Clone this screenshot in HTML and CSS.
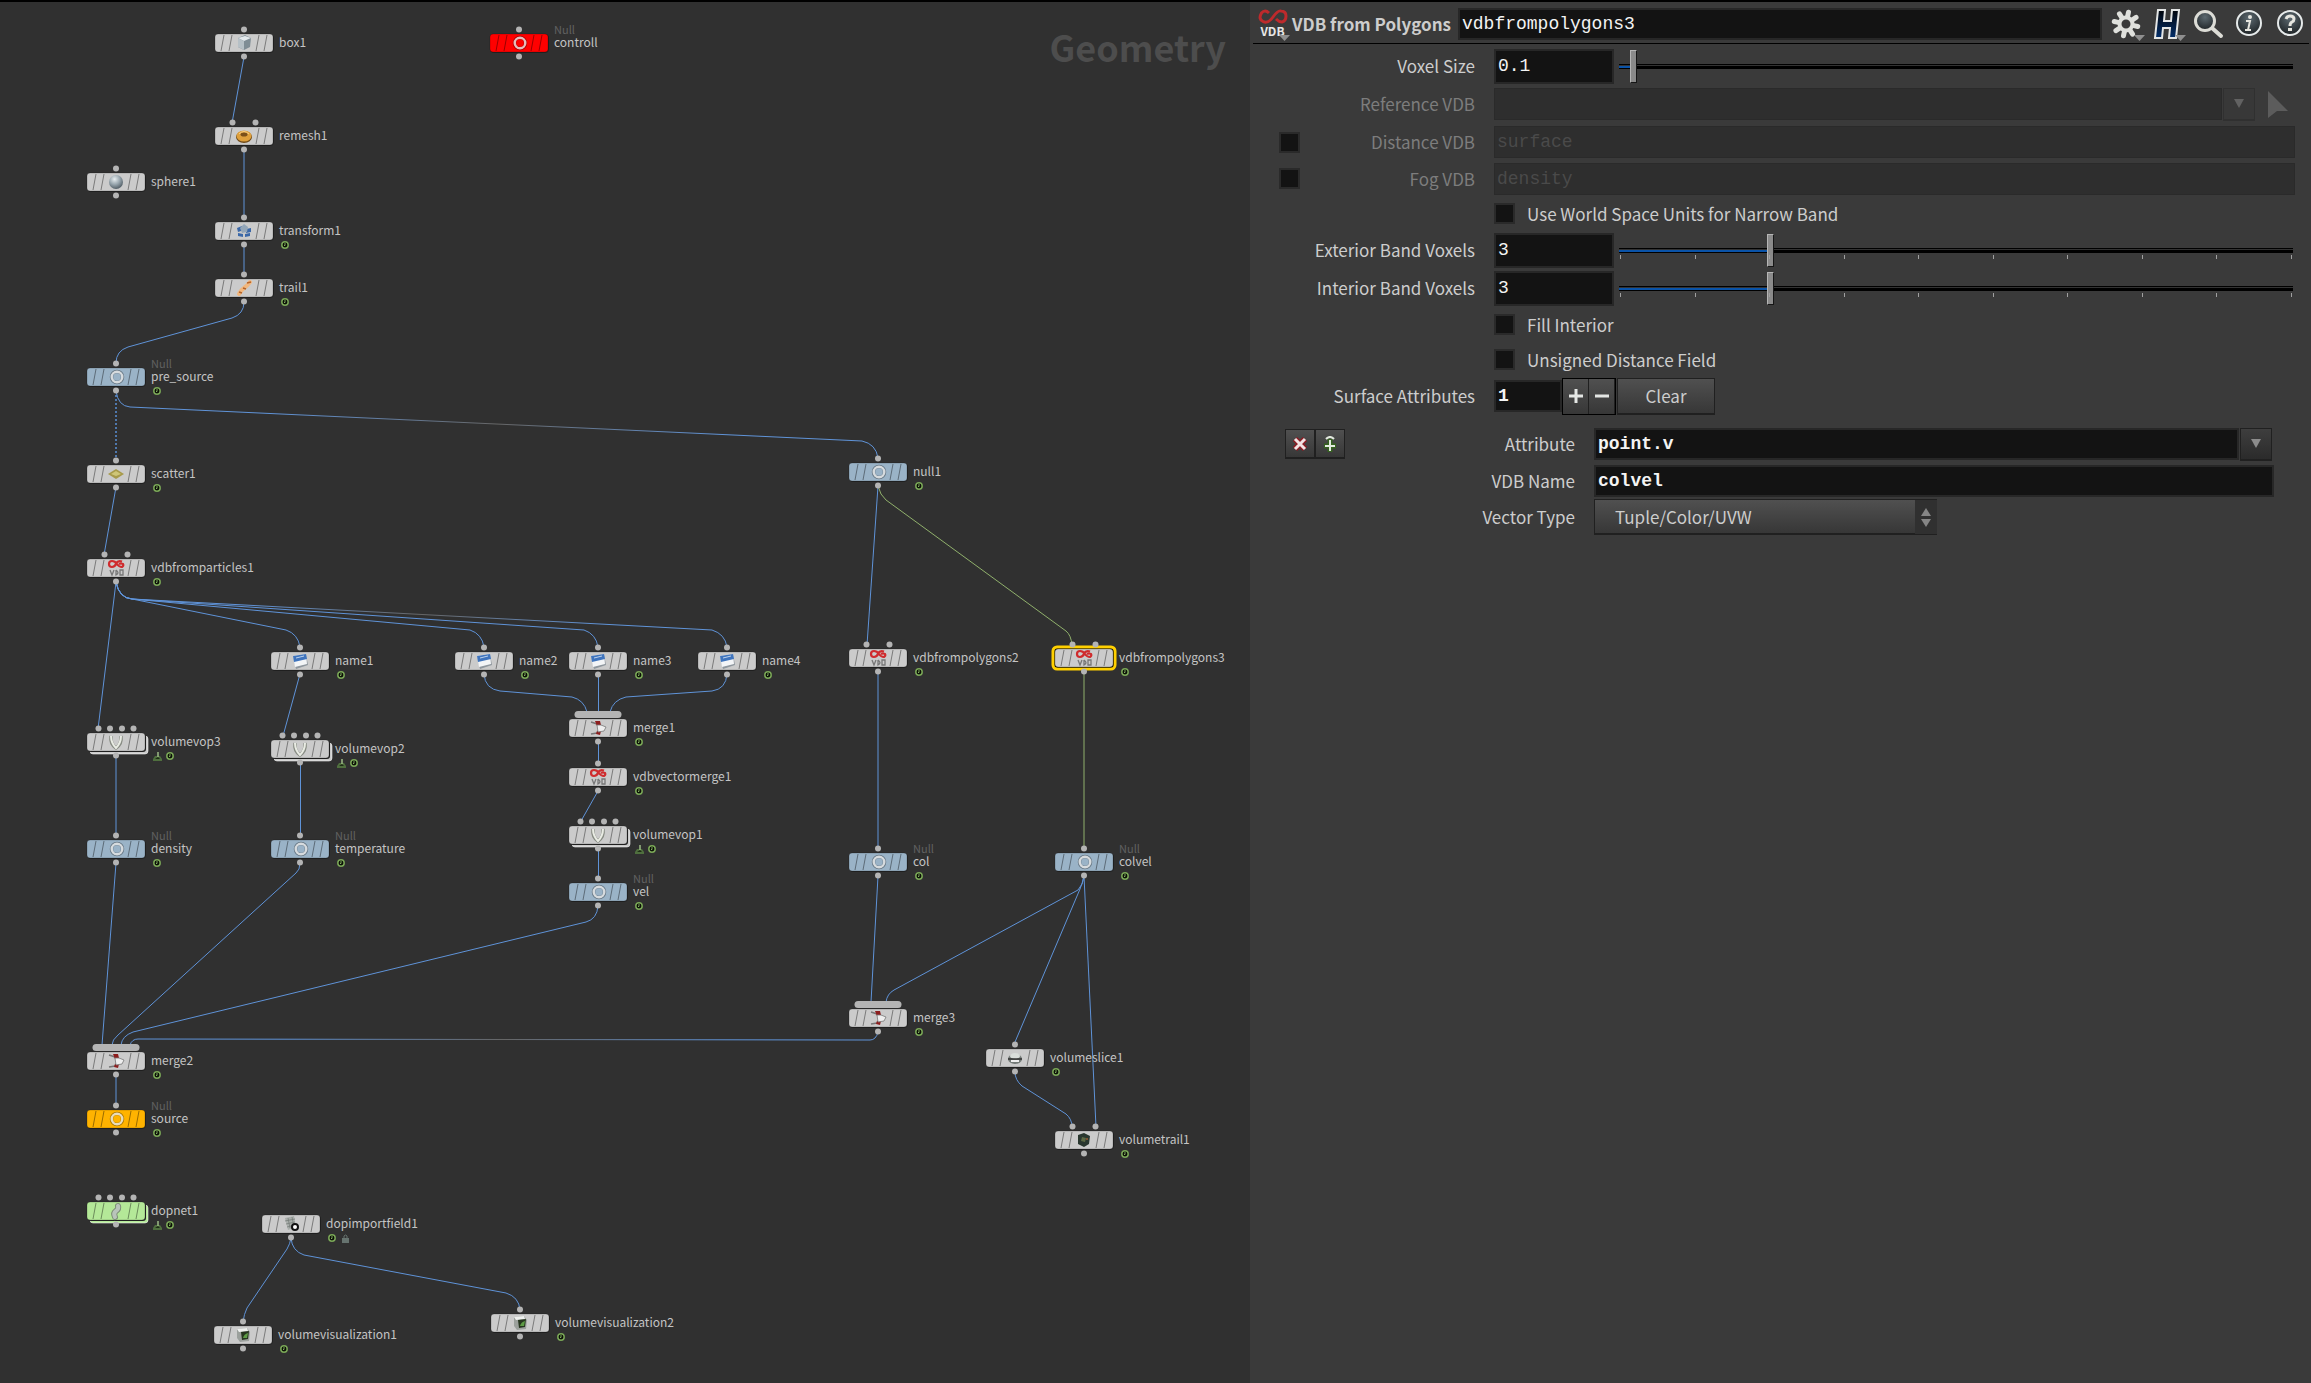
FILE: index.html
```html
<!DOCTYPE html>
<html lang="en">
<head>
<meta charset="utf-8">
<title>Geometry network</title>
<link rel="stylesheet" href="styles.css">
</head>
<body>
<svg class="defs" aria-hidden="true">
  <defs>
    <linearGradient id="fade"><stop offset="0" stop-color="#5f93d8"/><stop offset=".2" stop-color="#5f93d8"/><stop offset=".5" stop-color="#666"/><stop offset=".8" stop-color="#5f93d8"/><stop offset="1" stop-color="#5f93d8"/></linearGradient>
    <radialGradient id="ball" cx=".4" cy=".3" r=".75"><stop offset="0" stop-color="#e8eef0"/><stop offset=".5" stop-color="#98a6ae"/><stop offset="1" stop-color="#4a565e"/></radialGradient>
    <radialGradient id="glass" cx=".5" cy=".3" r=".8"><stop offset="0" stop-color="#5c6970"/><stop offset="1" stop-color="#15191b"/></radialGradient>
    <linearGradient id="navy" x2="0" y2="1"><stop offset="0" stop-color="#02060c"/><stop offset="1" stop-color="#04306c"/></linearGradient>

    <g id="tile">
      <rect x="-29" y="-9" width="59" height="19" rx="4" fill="#0004"/>
      <rect x="-29" y="-9" width="58" height="18" rx="3" fill="currentColor" stroke="#0003"/>
      <path d="M-20-8l-3 16M-12-8l-3 16M15-8l-3 16M23-8l-3 16" stroke="#000" stroke-opacity=".4" fill="none"/>
    </g>
    <g id="stack"><rect x="-26" y="-6" width="58" height="18" rx="3" fill="currentColor" stroke="#fff8"/><rect x="-28" y="-8" width="58" height="18" rx="3" fill="#303030"/></g>
    <g id="in1"><circle cy="-13.500" r="3"/></g>
    <g id="in2"><circle cx="-11.500" cy="-13.500" r="3"/><circle cx="11.500" cy="-13.500" r="3"/></g>
    <g id="in4"><circle cx="-17.500" cy="-13.500" r="3"/><circle cx="-6" cy="-13.500" r="3"/><circle cx="6" cy="-13.500" r="3"/><circle cx="17.500" cy="-13.500" r="3"/></g>
    <g id="bar"><rect x="-23.500" y="-17" width="47" height="7" rx="3.500"/></g>
    <g id="out"><circle cy="13.500" r="3"/></g>

    <g id="g-null"><circle cx="1" r="5.500" fill="none" stroke="#0005" stroke-width="3.500"/><circle cx="1" r="5.300" fill="none" stroke="#fffb" stroke-width="2.400"/></g>
    <g id="g-box"><path d="M-6-5L1-8 7-5 6 4 0 7-6 4z" fill="#7f8d95"/><path d="M-6-5L1-7 7-5 0-2z" fill="#e3e9ec"/><path d="M-6-5L0-2V7L-6 4z" fill="#b6c0c6"/></g>
    <g id="g-torus"><ellipse cy="1" rx="8" ry="6" fill="#6f4a19"/><ellipse rx="7.500" ry="5.500" fill="#dfa03c"/><ellipse cy="-1.500" rx="3.500" ry="2" fill="#7b501a"/><path d="M-5-2Q0-7 5-2" stroke="#f6d08a" fill="none"/></g>
    <g id="g-sphere"><circle r="7" fill="url(#ball)"/></g>
    <g id="g-xform"><path d="M-7-3l5-2 2 4-6 2zM2-2l5-1v4l-5 1zM-6 2l5 1v3l-5-1zM1 3l5-1v3l-5 1z" fill="#3b68a8"/><path d="M-4-3L0-7 4-4 3 1-2 2z" fill="#93a6b8"/></g>
    <g id="g-trail"><path d="M-5 6Q-3 2 0 0T6-6" stroke="#f1b77e" stroke-width="4" stroke-linecap="round" fill="none"/><path d="M3-5l4-1M-1 0l3 1M-5 4l3 1" stroke="#b56228" stroke-width="1.500"/></g>
    <g id="g-scatter"><path d="M-8 0L0-5 8 0 0 5z" fill="#a79a4b"/><path d="M-5 0L0-3 5 0 0 2z" fill="#cfc678"/></g>
    <g id="g-vdb"><path d="M6-6.500Q2-8 0-4.500-1-1-4-1-7-1-7-4-7-7-4-7-1-7 1-4 3-1 6-1 8-2 7-4 5-5 3-4" stroke="#cf2b2d" stroke-width="2.200" fill="none"/><path d="M-6 2l2 5 2-5M0 2v5q4-2 0-5M4 2v5h3V2z" stroke="#777" stroke-width="1.300" fill="none"/></g>
    <g id="g-name"><path d="M-7-4L6-7 8 4-4 8z" fill="#8f979e"/><path d="M-7-5L6-7 7 3-5 6z" fill="#f3f5f7"/><path d="M-7-5L6-7 7-2-6 1z" fill="#3f74bd"/><path d="M-4-3l8-2" stroke="#bdd3ee"/></g>
    <g id="g-merge"><path d="M-7-6L-1-4 2 0-1 5-7 6" stroke="#777" stroke-width="1.500" fill="none"/><path d="M-3-7h5l1 4-4 1zM-1 3h4l-1 4-4-1z" fill="#8d1d1d"/><path d="M-1-3h4l5 2-2 4-6 1z" fill="#eee" stroke="#777" stroke-width=".8"/></g>
    <g id="g-vop"><path d="M-5-6Q-6 2 0 6 6 2 5-6" stroke="#888c84" stroke-width="3.500" fill="none"/><path d="M-5-6Q-5 1 0 6 5 1 5-6" stroke="#e9ece4" stroke-width="2" fill="none"/></g>
    <g id="g-slice"><ellipse cy="1" rx="7" ry="5" fill="#737a77"/><ellipse cy="-2" rx="5" ry="3" fill="#d9ddda"/><path d="M-7 1h14" stroke="#333" stroke-width="1.500"/><path d="M-4 3h8" stroke="#eee" stroke-width="2"/></g>
    <g id="g-vtrail"><path d="M-6-5L0-7 6-4 5 4 0 7-6 4z" fill="#29372f"/><path d="M-2-3l4 1-1 4-4-1z" fill="#5d6a45"/><circle cx="3" cy="-1" r="1" fill="#9b5b35"/></g>
    <g id="g-dop"><path d="M2-5Q3-2 0 0T-1 6" stroke="#7d8f77" stroke-width="6" stroke-linecap="round" fill="none"/><path d="M2-5Q3-2 0 0T-1 6" stroke="#b9c4bb" stroke-width="4" stroke-linecap="round" fill="none"/></g>
    <g id="g-import"><path d="M-6-6L3-8 5 3-3 6z" fill="#a9aeab"/><path d="M-6-3l10-2M-5 0l9-2M-4 3l8-2M-3-6l2 10M1-7l2 10" stroke="#777d7a" stroke-width=".8"/><circle cx="4" cy="3" r="3" fill="#fff" stroke="#111" stroke-width="2"/></g>
    <g id="g-vis"><path d="M-6-6L4-7 7-3 6 6-3 7-6 3z" fill="#9ba09c"/><path d="M-6-6L4-7 5-4-4-3z" fill="#eef0ee"/><path d="M-2-3l8-1-1 8-6 1z" fill="#26361f"/><path d="M0 3Q1-1 5-2L4 3z" fill="#5d9c45"/></g>
    <g id="f-time"><circle cx="4" cy="4" r="3.200" fill="#0a0f05" stroke="#7aa757" stroke-width="1.500"/><path d="M4 2v2.500H3" stroke="#9ccf76" stroke-width=".8" fill="none"/></g>
    <g id="f-net"><path d="M0 9V7l2-3h5l2 3v2z" fill="#4f6f3e"/><path d="M2 7l3-2 2 2" fill="#1e2c16"/><path d="M5 0v5" stroke="#9dbb86" stroke-width="1.500"/></g>
    <g id="f-lock"><path d="M1 4h7v5H1z" fill="#66736f"/><path d="M3 4V2q1.500-2 3 0v2" stroke="#66736f" fill="none"/></g>
    <path id="drop" d="M0 0h11L5.500 6z" fill="#8f8f8f"/>
  </defs>
</svg>

<main class="workspace">
<section class="network" aria-label="Network editor">
  <h1 class="context">Geometry</h1>
  <svg class="wires" aria-hidden="true">
    <path d="M244 57L232 123M244 150V218M244 245V275M244 302Q244 314 232 318L128 347Q116 351 116 363"/>
    <path class="dotted" d="M116 391V460"/>
    <path class="faded" d="M116 391Q118 406 130 407L862 441Q876 444 878 458"/>
    <path d="M116 487L104 555M116 582L98 729M116 582Q119 598 132 599L286 630Q298 634 300 647"/>
    <path d="M116 582Q119 598 132 599L470 630Q482 634 484 647M116 582Q119 598 132 599L584 630Q596 634 598 647"/>
    <path class="faded" d="M116 582Q119 598 132 599L712 630Q725 634 727 647"/>
    <path d="M300 674L283 736M484 674Q485 689 500 691L572 697Q584 700 587 712M598.500 674V712M727 674Q726 689 712 691L626 697Q613 700 610 712"/>
    <path d="M598.500 742V764M598 791L581 821M598.500 849V878M598 906Q597 919 586 922L133 1032Q122 1036 121 1045"/>
    <path d="M116 756V835M300.500 763V835M116 863L102 1045M300 863Q300 870 296 873L118 1035Q112 1040 112 1045M116 1075V1105"/>
    <path class="faded" d="M878 1032Q876 1040 870 1040L138 1039Q132 1039 130 1045"/>
    <path d="M878 486L867 645M878 672V849M878 876L871 1002"/>
    <path class="active" d="M878 486Q880 495 886 500L1066 631Q1071 635 1072 645M1084 672V849"/>
    <path d="M1084 876Q1083 885 1078 890L894 990Q887 994 886 1002M1084 876Q1083 882 1080 889L1015 1042M1084 876L1096 1127M1015 1072Q1015 1080 1022 1086L1066 1114Q1072 1119 1072 1127"/>
    <path d="M291 1238Q290 1244 287 1249L247 1308Q244 1314 243 1322M291 1238Q292 1251 304 1255L506 1293Q519 1297 520 1310"/>
  </svg>

  <div class="node" style="left:244px;top:43px"><svg class="tile"><use href="#in1"/><use href="#out"/><use href="#tile"/><use href="#g-box"/></svg><div class="label"><span class="name">box1</span></div></div>
  <div class="node red" style="left:519px;top:43px"><svg class="tile"><use href="#in1"/><use href="#out"/><use href="#tile"/><use href="#g-null"/></svg><div class="label"><span class="type">Null</span><span class="name">controll</span></div></div>
  <div class="node" style="left:244px;top:136px"><svg class="tile"><use href="#in2"/><use href="#out"/><use href="#tile"/><use href="#g-torus"/></svg><div class="label"><span class="name">remesh1</span></div></div>
  <div class="node" style="left:116px;top:182px"><svg class="tile"><use href="#in1"/><use href="#out"/><use href="#tile"/><use href="#g-sphere"/></svg><div class="label"><span class="name">sphere1</span></div></div>
  <div class="node" style="left:244px;top:231px"><svg class="tile"><use href="#in1"/><use href="#out"/><use href="#tile"/><use href="#g-xform"/></svg><div class="label"><span class="name">transform1</span><span class="flags"><svg><use href="#f-time"/></svg></span></div></div>
  <div class="node" style="left:244px;top:288px"><svg class="tile"><use href="#in1"/><use href="#out"/><use href="#tile"/><use href="#g-trail"/></svg><div class="label"><span class="name">trail1</span><span class="flags"><svg><use href="#f-time"/></svg></span></div></div>
  <div class="node null" style="left:116px;top:377px"><svg class="tile"><use href="#in1"/><use href="#out"/><use href="#tile"/><use href="#g-null"/></svg><div class="label"><span class="type">Null</span><span class="name">pre_source</span><span class="flags"><svg><use href="#f-time"/></svg></span></div></div>
  <div class="node" style="left:116px;top:474px"><svg class="tile"><use href="#in1"/><use href="#out"/><use href="#tile"/><use href="#g-scatter"/></svg><div class="label"><span class="name">scatter1</span><span class="flags"><svg><use href="#f-time"/></svg></span></div></div>
  <div class="node null" style="left:878px;top:472px"><svg class="tile"><use href="#in1"/><use href="#out"/><use href="#tile"/><use href="#g-null"/></svg><div class="label"><span class="name">null1</span><span class="flags"><svg><use href="#f-time"/></svg></span></div></div>
  <div class="node" style="left:116px;top:568px"><svg class="tile"><use href="#in2"/><use href="#out"/><use href="#tile"/><use href="#g-vdb"/></svg><div class="label"><span class="name">vdbfromparticles1</span><span class="flags"><svg><use href="#f-time"/></svg></span></div></div>
  <div class="node" style="left:300px;top:661px"><svg class="tile"><use href="#in1"/><use href="#out"/><use href="#tile"/><use href="#g-name"/></svg><div class="label"><span class="name">name1</span><span class="flags"><svg><use href="#f-time"/></svg></span></div></div>
  <div class="node" style="left:484px;top:661px"><svg class="tile"><use href="#in1"/><use href="#out"/><use href="#tile"/><use href="#g-name"/></svg><div class="label"><span class="name">name2</span><span class="flags"><svg><use href="#f-time"/></svg></span></div></div>
  <div class="node" style="left:598px;top:661px"><svg class="tile"><use href="#in1"/><use href="#out"/><use href="#tile"/><use href="#g-name"/></svg><div class="label"><span class="name">name3</span><span class="flags"><svg><use href="#f-time"/></svg></span></div></div>
  <div class="node" style="left:727px;top:661px"><svg class="tile"><use href="#in1"/><use href="#out"/><use href="#tile"/><use href="#g-name"/></svg><div class="label"><span class="name">name4</span><span class="flags"><svg><use href="#f-time"/></svg></span></div></div>
  <div class="node" style="left:878px;top:658px"><svg class="tile"><use href="#in2"/><use href="#out"/><use href="#tile"/><use href="#g-vdb"/></svg><div class="label"><span class="name">vdbfrompolygons2</span><span class="flags"><svg><use href="#f-time"/></svg></span></div></div>
  <div class="node" style="left:1084px;top:658px"><svg class="tile"><rect class="selected" x="-31" y="-11" width="62" height="22" rx="4"/><use href="#in2"/><use href="#out"/><use href="#tile"/><use href="#g-vdb"/></svg><div class="label"><span class="name">vdbfrompolygons3</span><span class="flags"><svg><use href="#f-time"/></svg></span></div></div>
  <div class="node" style="left:598px;top:728px"><svg class="tile"><use href="#bar"/><use href="#out"/><use href="#tile"/><use href="#g-merge"/></svg><div class="label"><span class="name">merge1</span><span class="flags"><svg><use href="#f-time"/></svg></span></div></div>
  <div class="node" style="left:598px;top:777px"><svg class="tile"><use href="#in1"/><use href="#out"/><use href="#tile"/><use href="#g-vdb"/></svg><div class="label"><span class="name">vdbvectormerge1</span><span class="flags"><svg><use href="#f-time"/></svg></span></div></div>
  <div class="node" style="left:598px;top:835px"><svg class="tile"><use href="#in4"/><use href="#stack"/><use href="#out"/><use href="#tile"/><use href="#g-vop"/></svg><div class="label"><span class="name">volumevop1</span><span class="flags"><svg><use href="#f-net"/></svg><svg><use href="#f-time"/></svg></span></div></div>
  <div class="node null" style="left:598px;top:892px"><svg class="tile"><use href="#in1"/><use href="#out"/><use href="#tile"/><use href="#g-null"/></svg><div class="label"><span class="type">Null</span><span class="name">vel</span><span class="flags"><svg><use href="#f-time"/></svg></span></div></div>
  <div class="node" style="left:116px;top:742px"><svg class="tile"><use href="#in4"/><use href="#stack"/><use href="#out"/><use href="#tile"/><use href="#g-vop"/></svg><div class="label"><span class="name">volumevop3</span><span class="flags"><svg><use href="#f-net"/></svg><svg><use href="#f-time"/></svg></span></div></div>
  <div class="node" style="left:300px;top:749px"><svg class="tile"><use href="#in4"/><use href="#stack"/><use href="#out"/><use href="#tile"/><use href="#g-vop"/></svg><div class="label"><span class="name">volumevop2</span><span class="flags"><svg><use href="#f-net"/></svg><svg><use href="#f-time"/></svg></span></div></div>
  <div class="node null" style="left:116px;top:849px"><svg class="tile"><use href="#in1"/><use href="#out"/><use href="#tile"/><use href="#g-null"/></svg><div class="label"><span class="type">Null</span><span class="name">density</span><span class="flags"><svg><use href="#f-time"/></svg></span></div></div>
  <div class="node null" style="left:300px;top:849px"><svg class="tile"><use href="#in1"/><use href="#out"/><use href="#tile"/><use href="#g-null"/></svg><div class="label"><span class="type">Null</span><span class="name">temperature</span><span class="flags"><svg><use href="#f-time"/></svg></span></div></div>
  <div class="node null" style="left:878px;top:862px"><svg class="tile"><use href="#in1"/><use href="#out"/><use href="#tile"/><use href="#g-null"/></svg><div class="label"><span class="type">Null</span><span class="name">col</span><span class="flags"><svg><use href="#f-time"/></svg></span></div></div>
  <div class="node null" style="left:1084px;top:862px"><svg class="tile"><use href="#in1"/><use href="#out"/><use href="#tile"/><use href="#g-null"/></svg><div class="label"><span class="type">Null</span><span class="name">colvel</span><span class="flags"><svg><use href="#f-time"/></svg></span></div></div>
  <div class="node" style="left:878px;top:1018px"><svg class="tile"><use href="#bar"/><use href="#out"/><use href="#tile"/><use href="#g-merge"/></svg><div class="label"><span class="name">merge3</span><span class="flags"><svg><use href="#f-time"/></svg></span></div></div>
  <div class="node" style="left:1015px;top:1058px"><svg class="tile"><use href="#in1"/><use href="#out"/><use href="#tile"/><use href="#g-slice"/></svg><div class="label"><span class="name">volumeslice1</span><span class="flags"><svg><use href="#f-time"/></svg></span></div></div>
  <div class="node" style="left:1084px;top:1140px"><svg class="tile"><use href="#in2"/><use href="#out"/><use href="#tile"/><use href="#g-vtrail"/></svg><div class="label"><span class="name">volumetrail1</span><span class="flags"><svg><use href="#f-time"/></svg></span></div></div>
  <div class="node" style="left:116px;top:1061px"><svg class="tile"><use href="#bar"/><use href="#out"/><use href="#tile"/><use href="#g-merge"/></svg><div class="label"><span class="name">merge2</span><span class="flags"><svg><use href="#f-time"/></svg></span></div></div>
  <div class="node orange" style="left:116px;top:1119px"><svg class="tile"><use href="#in1"/><use href="#out"/><use href="#tile"/><use href="#g-null"/></svg><div class="label"><span class="type">Null</span><span class="name">source</span><span class="flags"><svg><use href="#f-time"/></svg></span></div></div>
  <div class="node green" style="left:116px;top:1211px"><svg class="tile"><use href="#in4"/><use href="#stack"/><use href="#out"/><use href="#tile"/><use href="#g-dop"/></svg><div class="label"><span class="name">dopnet1</span><span class="flags"><svg><use href="#f-net"/></svg><svg><use href="#f-time"/></svg></span></div></div>
  <div class="node" style="left:291px;top:1224px"><svg class="tile"><use href="#out"/><use href="#tile"/><use href="#g-import"/></svg><div class="label"><span class="name">dopimportfield1</span><span class="flags"><svg><use href="#f-time"/></svg><svg><use href="#f-lock"/></svg></span></div></div>
  <div class="node" style="left:243px;top:1335px"><svg class="tile"><use href="#in1"/><use href="#out"/><use href="#tile"/><use href="#g-vis"/></svg><div class="label"><span class="name">volumevisualization1</span><span class="flags"><svg><use href="#f-time"/></svg></span></div></div>
  <div class="node" style="left:520px;top:1323px"><svg class="tile"><use href="#in1"/><use href="#out"/><use href="#tile"/><use href="#g-vis"/></svg><div class="label"><span class="name">volumevisualization2</span><span class="flags"><svg><use href="#f-time"/></svg></span></div></div>
</section>

<section class="params" aria-label="Parameters">
  <header class="head">
    <button class="optype" aria-label="Operator type">
      <svg class="loop" viewBox="0 0 30 15"><path d="M11 4Q7 0 3.500 4 0 10 5 12.500 10 15 15 8T23 2Q28 2 28 7 28 12 24 13 21 13 18 10" fill="none" stroke="#bd2a2c" stroke-width="3"/></svg>
      <span>VDB</span>
      <svg class="caret" viewBox="0 0 11 6"><use href="#drop"/></svg>
    </button>
    <label class="title" for="opname">VDB from Polygons</label>
    <input class="field" id="opname" value="vdbfrompolygons3">
    <div class="tools">
      <button aria-label="Settings"><svg viewBox="-16 -16 32 32"><g stroke="#dfe0dc" stroke-width="5" stroke-linecap="round"><path d="M0-12V-8M8.500-8.500L6-6M12 0H8M8.500 8.500L6 6M0 12V8M-8.500 8.500L-6 6M-12 0H-8M-8.500-8.500L-6-6" transform="rotate(12)"/></g><circle r="6.500" fill="none" stroke="#dfe0dc" stroke-width="4"/></svg><svg class="caret" viewBox="0 0 11 6"><use href="#drop"/></svg></button>
      <button aria-label="Handles"><svg viewBox="-16 -16 32 32"><path d="M-9-14H-2L-3-3H4L5-14H12L9 14H2L3 4H-4L-5 14H-12z" fill="url(#navy)" stroke="#e4e6e6" stroke-width="2"/></svg><svg class="caret" viewBox="0 0 11 6"><use href="#drop"/></svg></button>
      <button aria-label="Search"><svg viewBox="-16 -16 32 32"><path d="M4 4L13 12" stroke="#dcdcd6" stroke-width="4" stroke-linecap="round"/><circle cx="-3" cy="-3" r="9.500" fill="url(#glass)" stroke="#dcdcd6" stroke-width="3"/></svg></button>
      <button aria-label="Info"><svg viewBox="-16 -16 32 32"><circle cy="-1" r="12" fill="url(#glass)" stroke="#e6eaea" stroke-width="2"/><path d="M-3-3h4l-2 9M-4 6h6" stroke="#e6e6e0" stroke-width="2" fill="none"/><circle cx="1" cy="-7" r="2" fill="#e6e6e0"/></svg></button>
      <button aria-label="Help"><svg viewBox="-16 -16 32 32"><circle cy="-1" r="12" fill="url(#glass)" stroke="#e6eaea" stroke-width="2"/><path d="M-4-5Q-3-8 0-8 4-8 4-5 4-3 2-2T0 2" stroke="#e6e6e0" stroke-width="3" fill="none"/><path d="M-2 4h4v3h-4z" fill="#e6e6e0"/></svg></button>
    </div>
  </header>

  <form class="form">
    <div class="row"><label for="voxel">Voxel Size</label>
      <div class="ctl"><input class="field num" id="voxel" value="0.1">
        <div class="slider" style="--fill:2%"><input type="range" aria-label="Voxel Size" min="0" max="1000" value="16"></div></div></div>
    <div class="row off"><label for="ref">Reference VDB</label>
      <div class="ctl"><input class="field grow" id="ref" disabled><button class="menu" type="button" disabled aria-label="Reference menu"><svg viewBox="0 0 10 9"><path d="M0 0h10L5 9z"/></svg></button><button class="pick" type="button" disabled aria-label="Pick"><svg viewBox="0 0 20 27"><path d="M0 0L20 20 9 20 0 27z" fill="#5c5c5c"/></svg></button></div></div>
    <div class="row off"><div class="lead"><input type="checkbox" aria-label="Enable Distance VDB"><label for="dist">Distance VDB</label></div>
      <div class="ctl"><input class="field grow" id="dist" value="surface" disabled></div></div>
    <div class="row low off"><div class="lead"><input type="checkbox" aria-label="Enable Fog VDB"><label for="fog">Fog VDB</label></div>
      <div class="ctl"><input class="field grow" id="fog" value="density" disabled></div></div>
    <div class="row low"><span></span><label class="check"><input type="checkbox">Use World Space Units for Narrow Band</label></div>
    <div class="row"><label for="ext">Exterior Band Voxels</label>
      <div class="ctl"><input class="field num" id="ext" value="3">
        <div class="slider" style="--fill:22%"><input type="range" aria-label="Exterior Band Voxels" min="1" max="10" value="3"><div class="ticks"><i></i><i></i><i></i><i></i><i></i><i></i><i></i><i></i><i></i><i></i></div></div></div></div>
    <div class="row"><label for="int">Interior Band Voxels</label>
      <div class="ctl"><input class="field num" id="int" value="3">
        <div class="slider" style="--fill:22%"><input type="range" aria-label="Interior Band Voxels" min="1" max="10" value="3"><div class="ticks"><i></i><i></i><i></i><i></i><i></i><i></i><i></i><i></i><i></i><i></i></div></div></div></div>
    <div class="row low"><span></span><label class="check"><input type="checkbox">Fill Interior</label></div>
    <div class="row low"><span></span><label class="check"><input type="checkbox">Unsigned Distance Field</label></div>
    <div class="row"><label for="attrs">Surface Attributes</label>
      <div class="ctl"><input class="field count" id="attrs" value="1">
        <div class="pair tall"><button type="button" aria-label="Add"><svg viewBox="-8 -8 16 16"><path d="M0-7V7M-7 0H7" stroke="#e4e6e4" stroke-width="3"/></svg></button><button type="button" aria-label="Remove"><svg viewBox="-8 -8 16 16"><path d="M-7 0H7" stroke="#e4e6e4" stroke-width="3"/></svg></button></div>
        <button class="clear" type="button">Clear</button></div></div>

    <fieldset class="entry">
      <div class="row"><div class="lead"><div class="pair"><button type="button" aria-label="Delete entry"><svg viewBox="-8 -8 16 16"><path d="M-5-5L5 5M5-5L-5 5" stroke="#8d1a22" stroke-width="6"/><path d="M-5-5L5 5M5-5L-5 5" stroke="#f3e4e4" stroke-width="3"/></svg></button><button type="button" aria-label="Insert entry"><svg viewBox="-8 -8 16 16"><path d="M0-5V8M-6 2H6" stroke="#35611f" stroke-width="5"/><path d="M0-4V7M-5 2H5M-4-5Q0-9 4-5" stroke="#e3eadf" stroke-width="2" fill="none"/></svg></button></div><label for="attr">Attribute</label></div>
        <div class="ctl"><input class="field grow strong" id="attr" value="point.v"><button class="menu" type="button" aria-label="Attribute menu"><svg viewBox="0 0 10 9"><path d="M0 0h10L5 9z"/></svg></button></div></div>
      <div class="row low"><label for="vname">VDB Name</label>
        <div class="ctl"><input class="field grow strong" id="vname" value="colvel"></div></div>
      <div class="row"><label for="vtype">Vector Type</label>
        <div class="ctl"><div class="combo"><select id="vtype"><option>Tuple/Color/UVW</option></select><svg viewBox="0 0 22 34"><path d="M11 8l5 8H6zM11 27l5-8H6z"/></svg></div></div></div>
    </fieldset>
  </form>
</section>
</main>
</body>
</html>
```
FILE: styles.css
```css
* { box-sizing: border-box; }
body {
  margin: 0;
  background: #303030;
  color: #cdcdcd;
  font: 17px/24px "Noto Sans CJK SC", "Open Sans", sans-serif;
}
.defs { position: absolute; width: 0; height: 0; }
.workspace {
  display: grid;
  grid-template-columns: 1250fr 1061fr;
  min-height: 100vh;
  border-top: 2px solid #000;
}

/* network editor */
.network { position: relative; margin-top: -2px; min-height: 1380px; overflow: hidden; }
.context {
  margin: 0;
  padding: 18px 24px 0 0;
  text-align: right;
  font-size: 36px;
  line-height: 56px;
  font-weight: 700;
  color: #4d4d4d;
}
.wires { position: absolute; inset: 0; width: 100%; height: 100%; fill: none; stroke: #5f93d8; }
.wires .faded { stroke: url(#fade); }
.wires .active { stroke: #90b06c; }
.wires .dotted { stroke-dasharray: 2 2; stroke-width: 2; stroke: #4f78ad; }
.node {
  position: absolute;
  display: flex;
  gap: 2px;
  width: max-content;
  height: 40px;
  margin: -20px 0 0 -33px;
  color: #cbcbcb;
}
.node.null { color: #9ab3c7; }
.node.red { color: #f00; }
.node.orange { color: #ffb300; }
.node.green { color: #b4e898; }
.tile { width: 66px; height: 40px; overflow: visible; fill: #b4b4b4; }
.tile use { transform: translate(33px, 20px); }
.selected { transform: translate(33px, 20px); fill: #000; stroke: #ffd000; stroke-width: 3; }
.label { display: grid; grid-template-rows: 12px 14px 14px; color: #c4c4c4; font-size: 12px; line-height: 14px; }
.type { grid-row: 1; line-height: 12px; font-size: 11px; color: #616161; }
.name { grid-row: 2; }
.flags { grid-row: 3; display: flex; gap: 4px; padding: 4px 0 0 2px; }
.flags svg { width: 9px; height: 9px; overflow: visible; }

/* parameter pane */
.params { background: #3a3a3a; }
.head {
  display: flex;
  align-items: center;
  height: 42px;
  margin: 0 2px 0 3px;
  padding: 2px 3px 0 4px;
  border-bottom: 1px solid #000;
}
button, input, select { font: inherit; color: inherit; margin: 0; padding: 0; border: 0; border-radius: 0; background: none; }
.optype { display: grid; position: relative; width: 31px; margin-right: 4px; justify-items: center; }
.optype .loop { width: 30px; height: 15px; }
.optype span { font-size: 12px; line-height: 14px; font-weight: 700; color: #e6e6e6; }
.caret { position: absolute; right: -2px; bottom: -3px; width: 11px; height: 6px; }
.title { width: 166px; font-weight: 700; white-space: nowrap; }
.field {
  height: 32px;
  min-width: 0;
  padding: 0 2px;
  border: 2px solid #272727;
  background: #131313;
  color: #f4f4f4;
  font: 18px/24px "Liberation Mono", monospace;
}
.field:disabled { background: #2e2e2e; border: 1px solid #2a2a2a; color: #4a4a4a; }
.strong, .count { font-weight: 700; }
.head .field { flex: 1; }
.tools { display: flex; gap: 9px; margin-left: 8px; }
.tools button { position: relative; width: 32px; height: 32px; }
.tools svg:first-child { display: block; width: 32px; height: 32px; }
.tools .caret { right: -3px; bottom: -1px; }

.form { padding: 3px 16px 0 0; }
.row { display: grid; grid-template-columns: 225px 1fr; column-gap: 19px; align-items: center; height: 38px; }
.row.low { height: 35px; }
.row > label:first-child { text-align: right; }
.off label { color: #7d7d7d; }
.lead { display: flex; justify-content: space-between; align-items: center; padding-left: 29px; }
.ctl { display: flex; align-items: center; }
.grow { flex: 1; }
.num { width: 120px; height: 35px; margin-right: 5px; }
.check { display: flex; align-items: center; gap: 12px; }
input[type="checkbox"] { appearance: none; width: 21px; height: 21px; background: #131313; border: 2px solid #2a2a2a; }

.slider { flex: 1; display: grid; margin-right: 2px; }
.slider > * { grid-area: 1 / 1; }
input[type="range"] {
  appearance: none;
  width: 100%;
  height: 35px;
  background:
    linear-gradient(#0a53a8, #0a53a8) 0 17px / var(--fill) 2px no-repeat,
    linear-gradient(#333, #333) 0 16px / 100% 1px no-repeat,
    linear-gradient(#000, #000) 0 15px / 100% 5px no-repeat;
}
input[type="range"]::-webkit-slider-thumb {
  appearance: none;
  width: 7px;
  height: 33px;
  border: 1px solid #161616;
  border-left-color: #b5b5b5;
  border-top-color: #b5b5b5;
  background: #8a8a8a;
}
.ticks { display: flex; justify-content: space-between; padding: 22px 1px 0; pointer-events: none; }
.ticks i { width: 1px; height: 4px; background: #a0a0a0; }

.menu, .clear, .pair button, .combo select {
  background: linear-gradient(#505050, #373737);
  border: 1px solid #202020;
  border-bottom-width: 2px;
}
.menu { width: 32px; height: 33px; margin-left: 1px; background: linear-gradient(#3e3e3e, #2b2b2b); }
.menu svg { width: 10px; height: 9px; display: block; margin: auto; fill: #8c8c8c; }
.menu:disabled { background: #383838; border-color: #303030; }
.menu:disabled svg { fill: #626262; }
.pick { width: 20px; height: 27px; margin: 0 7px 0 13px; }
.count { width: 68px; }
.pair { display: flex; }
.pair button { width: 30px; height: 30px; display: grid; place-items: center; }
.pair svg { width: 16px; height: 16px; }
.pair.tall { border: 1px solid #000; }
.pair.tall button { width: 26px; height: 35px; border-width: 0 1px 0 0; }
.clear { width: 98px; height: 37px; margin-left: 1px; }

.entry { margin: 10px 0 0; padding: 0 21px 0 0; border: 0; min-width: 0; }
.entry .row { grid-template-columns: 325px 1fr; }
.entry .lead { padding-left: 35px; }
.entry .menu { margin-right: 2px; }
.combo { display: grid; width: 343px; }
.combo > * { grid-area: 1 / 1; }
.combo select { appearance: none; height: 36px; padding-left: 20px; }
.combo svg { justify-self: end; align-self: center; width: 22px; height: 34px; background: #303030; fill: #858585; pointer-events: none; }
```
